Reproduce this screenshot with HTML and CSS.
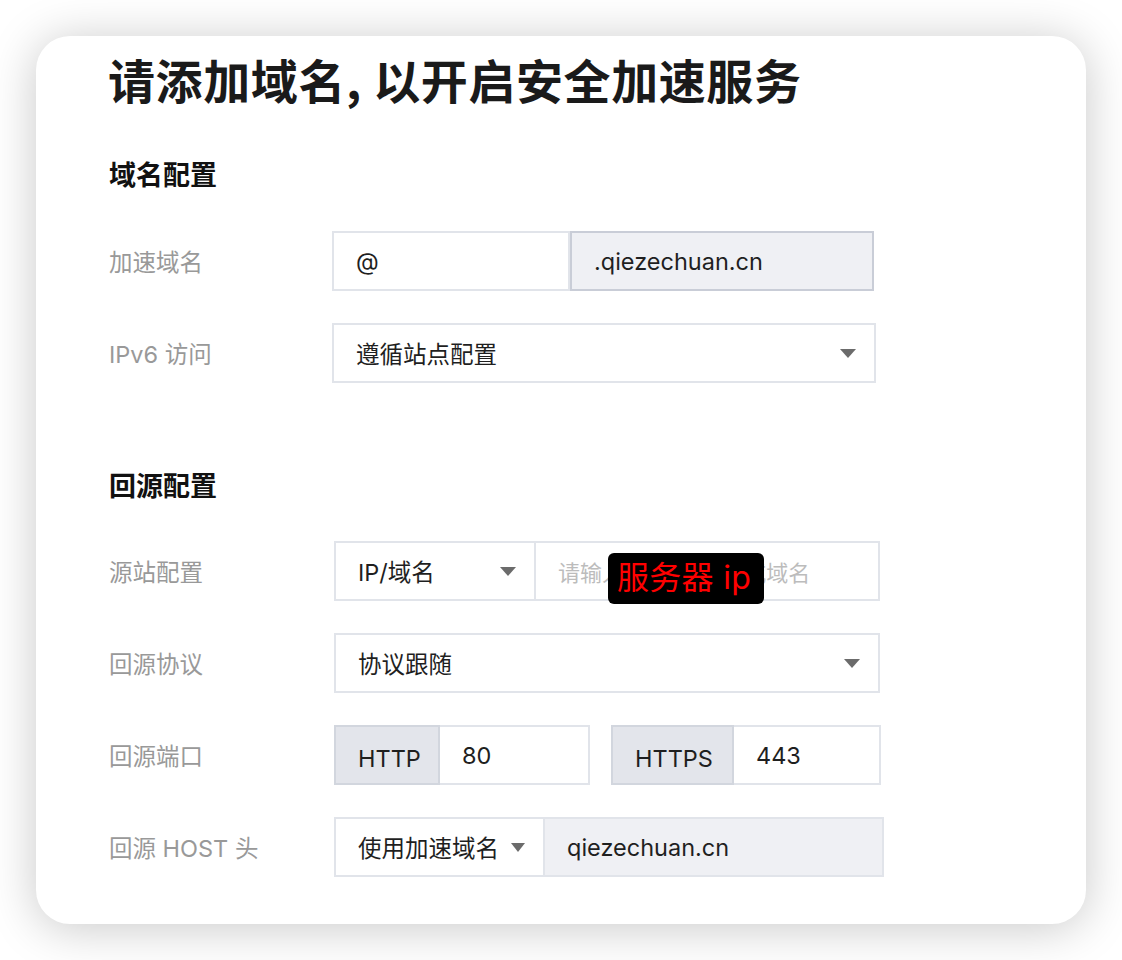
FILE: index.html
```html
<!DOCTYPE html>
<html lang="zh-CN">
<head>
<meta charset="utf-8">
<title>添加域名</title>
<link rel="stylesheet" href="styles.css">
</head>
<body>
<div class="card">
  <h1 class="title">请添加域名, 以开启安全加速服务</h1>

  <h2 class="section first">域名配置</h2>
  <div class="rows">
    <div class="row">
      <div class="label">加速域名</div>
      <div class="group g1">
        <div class="cell w238">@</div>
        <div class="cell suffix grow">.qiezechuan.cn</div>
      </div>
    </div>
    <div class="row">
      <div class="label">IPv6 访问</div>
      <div class="group g2">
        <div class="cell select grow">遵循站点配置<span class="arrow"></span></div>
      </div>
    </div>
  </div>

  <h2 class="section second">回源配置</h2>
  <div class="rows">
    <div class="row shift">
      <div class="label">源站配置</div>
      <div class="group g3">
        <div class="cell select w202">IP/域名<span class="arrow"></span></div>
        <div class="cell placeholder grow">请输入源站 IP 地址或域名
          <div class="tip">服务器 ip</div>
        </div>
      </div>
    </div>
    <div class="row shift">
      <div class="label">回源协议</div>
      <div class="group g3">
        <div class="cell select grow">协议跟随<span class="arrow"></span></div>
      </div>
    </div>
    <div class="row shift">
      <div class="label">回源端口</div>
      <div class="ports">
        <div class="group g5a">
          <div class="cell addon w106">HTTP</div>
          <div class="cell grow">80</div>
        </div>
        <div class="group g5b">
          <div class="cell addon w123">HTTPS</div>
          <div class="cell grow">443</div>
        </div>
      </div>
    </div>
    <div class="row shift">
      <div class="label">回源 HOST 头</div>
      <div class="group g6">
        <div class="cell select w211">使用加速域名<span class="arrow small"></span></div>
        <div class="cell readonly grow">qiezechuan.cn</div>
      </div>
    </div>
  </div>
</div>
</body>
</html>
```

FILE: styles.css
```css
* { box-sizing: border-box; }

html, body {
  margin: 0;
  background: #ffffff;
}

body {
  padding: 36px;
  font-family: "Inter", "Noto Sans CJK SC", sans-serif;
}

.card {
  width: 1050px;
  height: 888px;
  background: #ffffff;
  border-radius: 34px;
  box-shadow: 0 4px 48px rgba(0, 0, 0, 0.22);
  padding: 15px 0 0 72px;
}

.title {
  margin: 0;
  font-family: "Noto Sans CJK SC", sans-serif;
  font-size: 47px;
  line-height: 55px;
  font-weight: 700;
  color: #1a1a1a;
  letter-spacing: 0.6px;
}

.section {
  margin: 0;
  font-family: "Noto Sans CJK SC", sans-serif;
  font-size: 27px;
  line-height: 36px;
  font-weight: 700;
  color: #111111;
  padding-left: 1px;
}

.section.first { margin-top: 50px; margin-bottom: 39px; }
.section.second { margin-top: 84px; margin-bottom: 38px; }

.rows {
  display: flex;
  flex-direction: column;
  gap: 32px;
}

.row {
  display: flex;
  align-items: center;
  height: 60px;
}

.label {
  width: 224px;
  flex: none;
  padding-left: 1px;
  font-size: 23.5px;
  color: #999999;
}

.row.shift .label { width: 226px; }

.group {
  display: flex;
  height: 60px;
  position: relative;
}

.g1 { width: 542px; }
.g2 { width: 544px; }
.g3 { width: 546px; }
.g6 { width: 550px; }
.g5a { width: 256px; }
.g5b { width: 270px; }

.ports {
  display: flex;
  gap: 21px;
}

.cell {
  display: flex;
  align-items: center;
  height: 60px;
  padding: 0 22px;
  font-size: 23.5px;
  color: #1f1f1f;
  background: #ffffff;
  border: 2px solid #e1e4ea;
  position: relative;
}

.cell + .cell { border-left: none; }

.grow { flex: 1; }
.w238 { width: 238px; flex: none; }
.w202 { width: 202px; flex: none; }
.w211 { width: 211px; flex: none; }
.w106 { width: 106px; flex: none; }
.w123 { width: 123px; flex: none; }

.suffix {
  background: #eff0f4;
  border: 2px solid #c9cdd7;
}

.cell.suffix { border-left: 2px solid #c9cdd7; }

.addon {
  background: #e3e5eb;
  border-color: #d2d6de;
  padding-top: 6px;
}

.readonly {
  background: #eff0f4;
}

.select {
  justify-content: space-between;
  padding-right: 18px;
}

.arrow {
  width: 0;
  height: 0;
  border-left: 8px solid transparent;
  border-right: 8px solid transparent;
  border-top: 9px solid #6b6b6b;
}

.arrow.small {
  border-left-width: 7px;
  border-right-width: 7px;
  border-top-width: 9px;
}

.placeholder {
  color: #bcbcbc;
  font-size: 22px;
  white-space: nowrap;
  overflow: visible;
}

.tip {
  position: absolute;
  left: 72px;
  top: 10px;
  width: 156px;
  height: 51px;
  background: #000000;
  border-radius: 6px;
  color: #ff0000;
  font-size: 32px;
  line-height: 50px;
  padding-left: 9px;
  white-space: nowrap;
  letter-spacing: 0.3px;
}
```
